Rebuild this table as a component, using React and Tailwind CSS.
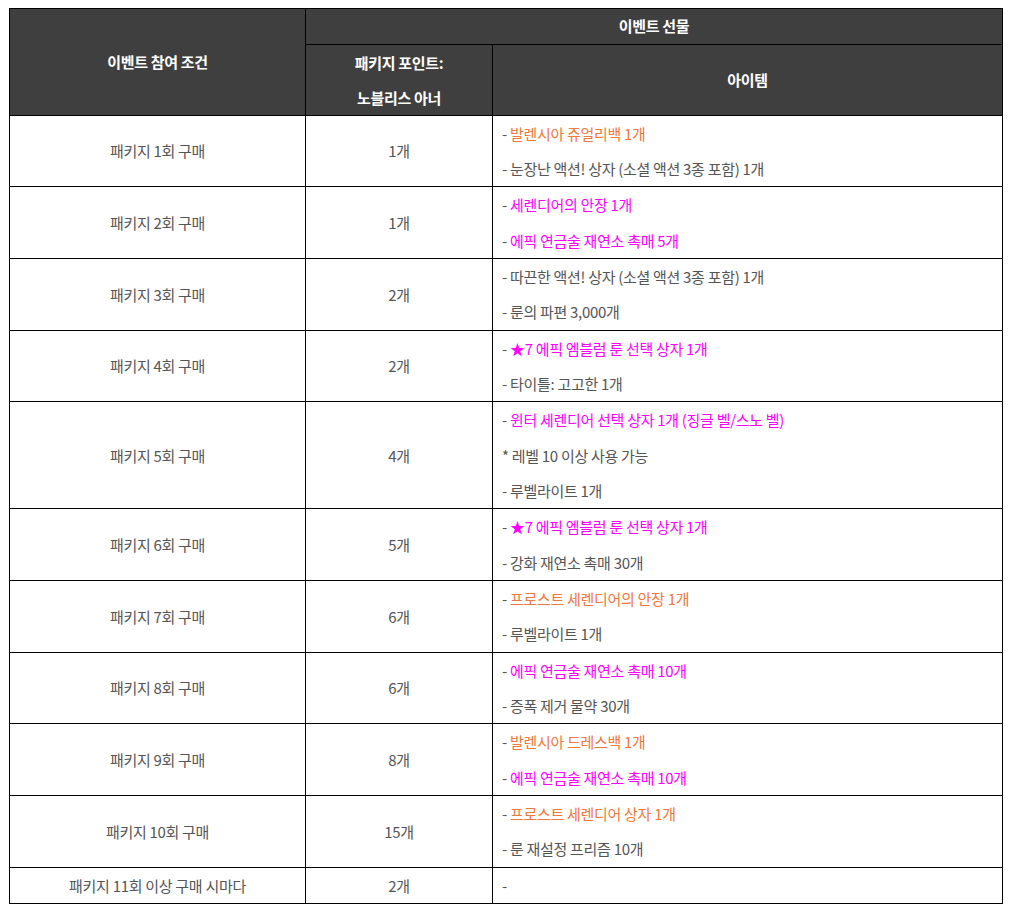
import React from "react";

const ORANGE = "text-[#f0783c]";
const PINK = "text-[#ff00ff]";

const rows = [
  {
    label: "패키지 1회 구매",
    points: "1개",
    items: [
      { text: "발렌시아 쥬얼리백 1개", color: ORANGE },
      { text: "눈장난 액션! 상자 (소셜 액션 3종 포함) 1개" },
    ],
  },
  {
    label: "패키지 2회 구매",
    points: "1개",
    items: [
      { text: "세렌디어의 안장 1개", color: PINK },
      { text: "에픽 연금술 재연소 촉매 5개", color: PINK },
    ],
  },
  {
    label: "패키지 3회 구매",
    points: "2개",
    items: [
      { text: "따끈한 액션! 상자 (소셜 액션 3종 포함) 1개" },
      { text: "룬의 파편 3,000개" },
    ],
  },
  {
    label: "패키지 4회 구매",
    points: "2개",
    items: [
      { text: "★7 에픽 엠블럼 룬 선택 상자 1개", color: PINK },
      { text: "타이틀: 고고한 1개" },
    ],
  },
  {
    label: "패키지 5회 구매",
    points: "4개",
    items: [
      { text: "윈터 세렌디어 선택 상자 1개 (징글 벨/스노 벨)", color: PINK },
      { text: "레벨 10 이상 사용 가능", prefix: "* " },
      { text: "루벨라이트 1개" },
    ],
  },
  {
    label: "패키지 6회 구매",
    points: "5개",
    items: [
      { text: "★7 에픽 엠블럼 룬 선택 상자 1개", color: PINK },
      { text: "강화 재연소 촉매 30개" },
    ],
  },
  {
    label: "패키지 7회 구매",
    points: "6개",
    items: [
      { text: "프로스트 세렌디어의 안장 1개", color: ORANGE },
      { text: "루벨라이트 1개" },
    ],
  },
  {
    label: "패키지 8회 구매",
    points: "6개",
    items: [
      { text: "에픽 연금술 재연소 촉매 10개", color: PINK },
      { text: "증폭 제거 물약 30개" },
    ],
  },
  {
    label: "패키지 9회 구매",
    points: "8개",
    items: [
      { text: "발렌시아 드레스백 1개", color: ORANGE },
      { text: "에픽 연금술 재연소 촉매 10개", color: PINK },
    ],
  },
  {
    label: "패키지 10회 구매",
    points: "15개",
    items: [
      { text: "프로스트 세렌디어 상자 1개", color: ORANGE },
      { text: "룬 재설정 프리즘 10개" },
    ],
  },
];

const font = {
  fontFamily: '"Noto Sans CJK KR", "Noto Sans", sans-serif',
};

export default function App() {
  return (
    <div className="bg-white w-[1013px] h-[914px] pt-[8px] pl-[9px]" style={font}>
      <table className="border-collapse table-fixed w-[994px] text-[15px] leading-[35.35px] tracking-[-0.3px] text-[#555]">
        <colgroup>
          <col className="w-[296px]" />
          <col className="w-[187px]" />
          <col />
        </colgroup>
        <thead>
          <tr className="bg-[#3f3f3f] text-white font-bold">
            <th rowSpan={2} className="border border-black text-center font-bold">
              이벤트 참여 조건
            </th>
            <th colSpan={2} className="border border-black text-center font-bold leading-[34.5px]">
              이벤트 선물
            </th>
          </tr>
          <tr className="bg-[#3f3f3f] text-white">
            <th className="border border-black text-center font-bold leading-[35px]">
              <div>패키지 포인트:</div>
              <div>노블리스 아너</div>
            </th>
            <th className="border border-black text-center font-bold">아이템</th>
          </tr>
        </thead>
        <tbody>
          {rows.map((row) => (
            <tr key={row.label}>
              <td className="border border-black text-center">{row.label}</td>
              <td className="border border-black text-center">{row.points}</td>
              <td className="border border-black pl-[9px]">
                {row.items.map((item, i) => (
                  <div key={i}>
                    {item.prefix || "- "}
                    <span className={item.color}>{item.text}</span>
                  </div>
                ))}
              </td>
            </tr>
          ))}
          <tr>
            <td className="border border-black text-center">패키지 11회 이상 구매 시마다</td>
            <td className="border border-black text-center">2개</td>
            <td className="border border-black pl-[9px]">-</td>
          </tr>
        </tbody>
      </table>
    </div>
  );
}
